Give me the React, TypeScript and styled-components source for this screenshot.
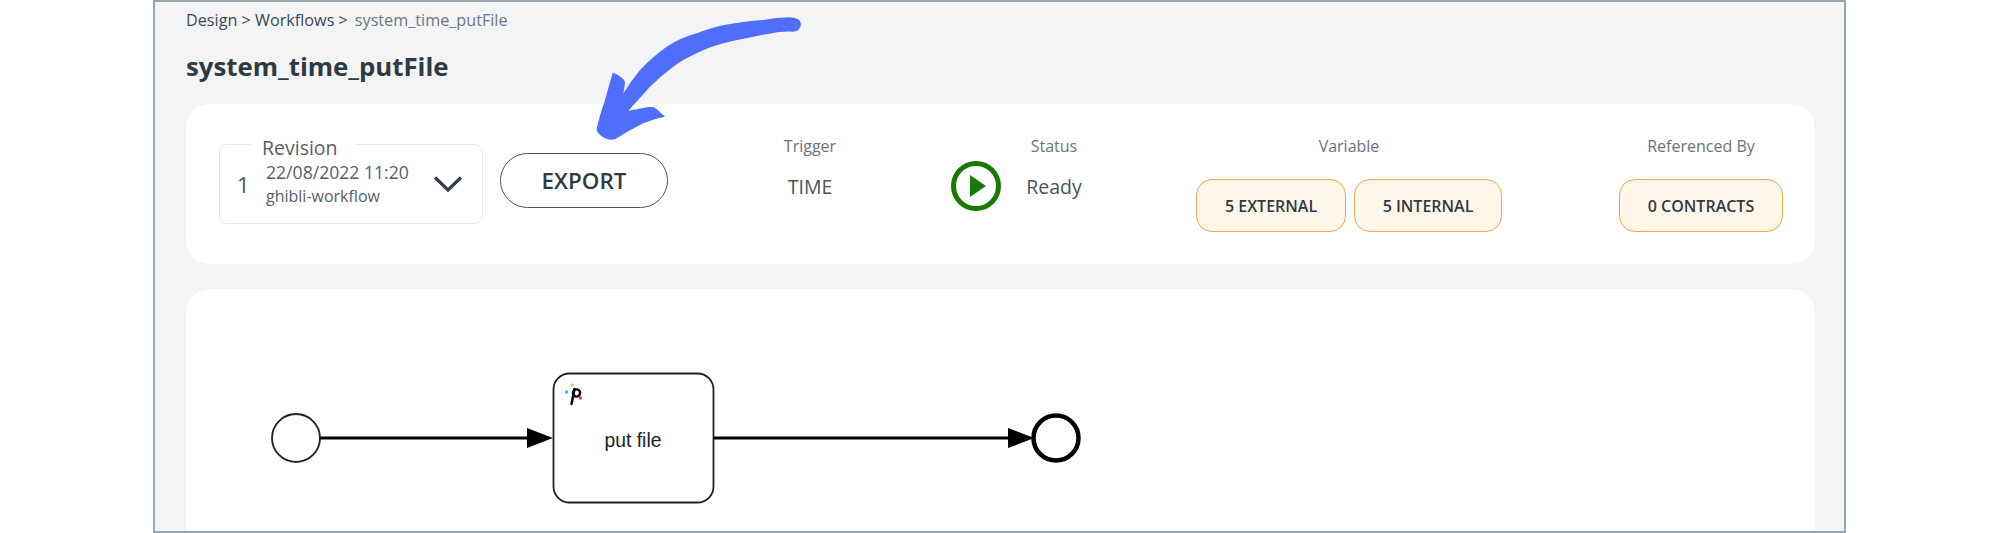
import styled, { createGlobalStyle } from 'styled-components';

const GlobalStyle = createGlobalStyle`
	html,
	body {
		margin: 0;
		background: #fff;
		font-family: 'Open Sans', sans-serif;
		color: #3d4852;
	}
`;

const Frame = styled.div`
	position: relative;
	box-sizing: border-box;
	overflow: hidden;
	width: 1693px;
	height: 533px;
	margin-left: 153px;
	padding: 0 29px 0 31px;
	background-color: #f3f4f6;
	border: 2px solid #98a4ae;
`;

const Breadcrumb = styled.div`
	display: flex;
	gap: 7px;
	padding-top: 8px;
	height: 21px;
	font-size: 16.2px;
	line-height: 20px;
`;

const Current = styled.span`
	color: #6f7880;
`;

const Title = styled.h1`
	margin: 17px 0 0;
	height: 39px;
	font-size: 25.8px;
	line-height: 36px;
	font-weight: 700;
	color: #2f3a42;
`;

const InfoCard = styled.section`
	display: flex;
	align-items: flex-start;
	box-sizing: border-box;
	height: 160px;
	padding: 31px 0 0 33px;
	margin-top: 17px;
	background: #fff;
	border-radius: 24px;
`;

const DiagramCard = styled.section`
	height: 260px;
	margin-top: 25px;
	background: #fff;
	border-radius: 24px;
	overflow: hidden;

	svg {
		display: block;
	}
`;

const RevisionBox = styled.div`
	position: relative;
	display: flex;
	align-items: center;
	box-sizing: border-box;
	width: 264px;
	height: 80px;
	margin-top: 9px;
	padding: 0 20px 0 17px;
	border: 1.5px solid #e6e8ea;
	border-radius: 8px;
`;

const RevisionLegend = styled.span`
	position: absolute;
	top: -9px;
	left: 31px;
	padding: 0 18px 0 11px;
	background: #fff;
	font-size: 19.5px;
	line-height: 24px;
	color: #56606a;
`;

const RevisionNumber = styled.span`
	width: 29px;
	font-size: 22px;
	color: #4a545e;
`;

const RevisionMeta = styled.div`
	flex: 1;
	display: flex;
	flex-direction: column;
	margin-top: -1px;
	color: #56606a;
`;

const RevisionDate = styled.span`
	font-size: 17.6px;
	line-height: 24px;
`;

const RevisionUser = styled.span`
	font-size: 16px;
	line-height: 24px;
`;

const ExportButton = styled.button`
	box-sizing: border-box;
	width: 168px;
	height: 55px;
	margin: 18px 0 0 17px;
	background: #fff;
	border: 1.5px solid #4b5258;
	border-radius: 28px;
	font-family: inherit;
	font-size: 22.4px;
	font-weight: 600;
	color: #2f3a42;
`;

const Column = styled.div<{ $width: number; $left: number }>`
	display: flex;
	flex-direction: column;
	align-items: center;
	width: ${(p) => p.$width}px;
	margin-left: ${(p) => p.$left}px;
`;

const Label = styled.div`
	height: 22px;
	font-size: 16px;
	line-height: 22px;
	color: #6a737c;
`;

const Value = styled.div`
	margin-top: 18px;
	font-size: 19.5px;
	line-height: 24px;
	color: #4a545e;
`;

const StatusGroup = styled.div`
	display: flex;
	align-items: flex-start;
	margin-left: 91px;
`;

const PlayIcon = styled.svg`
	display: block;
	margin-top: 25px;
`;

const Chips = styled.div`
	display: flex;
	gap: 8px;
	margin-top: 22px;
`;

const Chip = styled.div<{ $width: number }>`
	display: flex;
	align-items: center;
	justify-content: center;
	box-sizing: border-box;
	width: ${(p) => p.$width}px;
	height: 53px;
	background: #fff6ea;
	border: 1.5px solid #f5a654;
	border-radius: 16px;
	font-size: 16px;
	font-weight: 600;
	color: #2f3a42;
`;

const ArrowOverlay = styled.svg`
	position: absolute;
	top: 8px;
	left: 435px;
`;

const App = () => {
	return (
		<>
			<GlobalStyle />
			<Frame>
				<Breadcrumb>
					<span>Design &gt; Workflows &gt;</span>
					<Current>system_time_putFile</Current>
				</Breadcrumb>
				<Title>system_time_putFile</Title>
				<InfoCard>
					<RevisionBox>
						<RevisionLegend>Revision</RevisionLegend>
						<RevisionNumber>1</RevisionNumber>
						<RevisionMeta>
							<RevisionDate>22/08/2022 11:20</RevisionDate>
							<RevisionUser>ghibli-workflow</RevisionUser>
						</RevisionMeta>
						<svg width="28" height="18" viewBox="0 0 28 18" fill="none">
							<path d="M1 2.5 L14 15 L27 2.5" stroke="#333c44" strokeWidth="3.2" />
						</svg>
					</RevisionBox>
					<ExportButton>EXPORT</ExportButton>
					<Column $width={100} $left={92}>
						<Label>Trigger</Label>
						<Value>TIME</Value>
					</Column>
					<StatusGroup>
						<PlayIcon width="50" height="52" viewBox="0 0 50 52">
							<circle cx="25" cy="26" r="22.5" fill="none" stroke="#167a05" strokeWidth="5" />
							<path d="M19 15 L35 26 L19 37 Z" fill="#167a05" />
						</PlayIcon>
						<Column $width={56} $left={25}>
							<Label>Status</Label>
							<Value>Ready</Value>
						</Column>
					</StatusGroup>
					<Column $width={306} $left={114}>
						<Label>Variable</Label>
						<Chips>
							<Chip $width={150}>5 EXTERNAL</Chip>
							<Chip $width={148}>5 INTERNAL</Chip>
						</Chips>
					</Column>
					<Column $width={164} $left={117}>
						<Label>Referenced By</Label>
						<Chips>
							<Chip $width={164}>0 CONTRACTS</Chip>
						</Chips>
					</Column>
				</InfoCard>
				<DiagramCard>
					<svg width="1000" height="260" viewBox="186 289 1000 260">
						<circle cx="296" cy="438" r="24" fill="#fff" stroke="#222" strokeWidth="1.8" />
						<path d="M320 438 H530" stroke="#000" strokeWidth="3" />
						<path d="M527 428 L553 438 L527 448 Z" fill="#000" />
						<rect x="553.5" y="373.5" width="160" height="129" rx="16" fill="#fff" stroke="#222" strokeWidth="1.8" />
						<text x="633" y="447" textAnchor="middle" fontFamily="'Liberation Sans', sans-serif" fontSize="19.3" fill="#222">
							put file
						</text>
						<g fill="none" stroke="#000" strokeWidth="2.4" strokeLinecap="round">
							<path d="M574.5 389 L571.5 404" />
							<circle cx="576.5" cy="393" r="3.6" />
						</g>
						<circle cx="572" cy="385" r="1.6" fill="#f5b75a" />
						<circle cx="566.5" cy="392" r="1.7" fill="#35b8f0" />
						<circle cx="580.5" cy="398" r="1.7" fill="#e02fa8" />
						<path d="M714 438 H1010" stroke="#000" strokeWidth="3" />
						<path d="M1008 428 L1034 438 L1008 448 Z" fill="#000" />
						<circle cx="1056" cy="438" r="22.5" fill="#fff" stroke="#000" strokeWidth="4.5" />
					</svg>
				</DiagramCard>
				<ArrowOverlay width="220" height="135" viewBox="0 0 660 405">
					<path
						d="M600 22 Q632 24 633 42 Q630 64 610 65 Q575 62 500 78 Q440 90 400 100 Q355 112 320 130 Q280 148 250 170 Q212 198 180 230 L115 302 L180 290 Q192 290 200 297 L225 320 Q190 326 160 340 Q115 362 75 388 Q58 392 45 385 Q28 376 20 362 Q20 345 45 270 L68 188 Q85 192 100 208 Q106 214 105 222 L100 250 Q122 215 150 180 Q185 142 230 110 Q270 84 320 70 Q370 50 420 42 Q480 32 520 30 Q560 22 600 22 Z"
						fill="#4f6ffb"
					/>
				</ArrowOverlay>
			</Frame>
		</>
	);
};

export default App;
